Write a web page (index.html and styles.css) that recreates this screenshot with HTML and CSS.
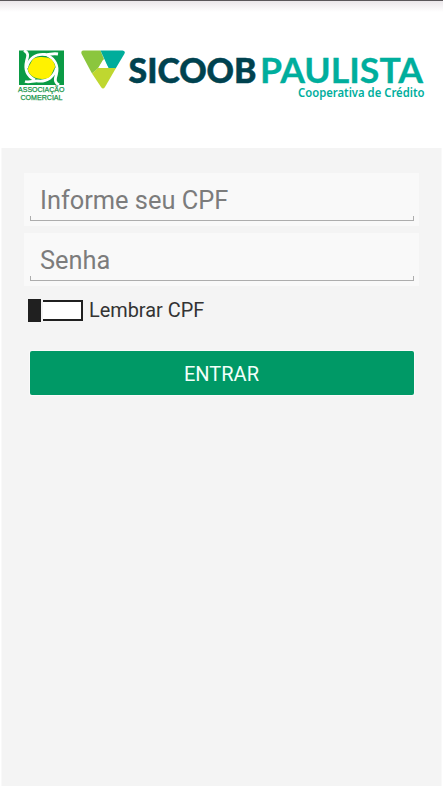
FILE: index.html
```html
<!DOCTYPE html>
<html lang="pt-BR">
<head>
<meta charset="utf-8">
<title>Sicoob Paulista</title>
<link rel="stylesheet" href="styles.css">
</head>
<body>
<header class="header">
  <svg class="assoc" viewBox="0 0 48 58" role="img" aria-label="Associação Comercial">
    <rect x="2" y="1.500" width="45" height="34.500" fill="#0b9b45"/>
    <g fill="none" stroke="#fff" stroke-width="2.800">
      <path d="M7 1.500C12 4 11 7 9.500 12C7.500 20 10 27 18 31"/>
      <path d="M41 5C35 4 33 6 28 5.500C19 4.500 12 9 9.500 19"/>
      <path d="M42 36C37 33 38 30 39.500 25C41.500 17 38 10 30 6"/>
      <path d="M8 32.500C13 34 16 31.500 21 32C30 33 37 28 39.500 19"/>
    </g>
    <path d="M18 9C23 7 31 8 34 10C38 14 39 18 37 20C35 24 34 28 31 29C26 31 19 30 15 27C11 24 10 20 12 17C14 14 15 10 18 9Z" fill="#fff200"/>
    <g class="assoc-name" fill="#159447">
      <text x="1" y="43" textLength="46.500" lengthAdjust="spacingAndGlyphs">ASSOCIAÇÃO</text>
      <text x="3.500" y="51" textLength="42" lengthAdjust="spacingAndGlyphs">COMERCIAL</text>
    </g>
  </svg>
  <svg class="sicoob" viewBox="0 0 346 58" role="img" aria-label="Sicoob Paulista, Cooperativa de Crédito">
    <path d="M2.500 1.500H19.500L23 10L17.500 19L11 24.500L.6 5Q-.5 1.500 2.500 1.500Z" fill="#8bc63e"/>
    <path d="M19.500 1.500H41.500Q45 2 43.300 5L34.800 19.300H27.500Z" fill="#00ad9b"/>
    <path d="M17 19H35L24 38Q22 41 20 38L11 24.500Z" fill="#bfd730"/>
    <path d="M22.300 10.500L27.500 19H17.200Z" fill="#fff"/>
    <g class="brand">
      <text x="47.500" y="34" textLength="128" lengthAdjust="spacingAndGlyphs" fill="#00424f" stroke="#00424f" stroke-width=".5">SICOOB</text>
      <text class="paulista" x="179" y="34" textLength="163" lengthAdjust="spacingAndGlyphs" fill="#00ae9d">PAULISTA</text>
    </g>
    <text class="tagline" x="217" y="48" textLength="126.500" lengthAdjust="spacingAndGlyphs" fill="#00ae9d">Cooperativa de Crédito</text>
  </svg>
</header>
<main class="login">
  <label class="field"><input class="input" type="text" placeholder="Informe seu CPF"><span class="line"></span></label>
  <label class="field"><input class="input" type="password" placeholder="Senha"><span class="line"></span></label>
  <div class="remember">
    <span class="thumb"></span><span class="track"></span>
    <span class="remember-text">Lembrar CPF</span>
  </div>
  <button class="enter" type="button">ENTRAR</button>
</main>
</body>
</html>
```
FILE: styles.css
```css
* { box-sizing: border-box; }
body {
  margin: 0;
  height: 788px;
  overflow: hidden;
  background: #fff;
  font-family: Roboto, sans-serif;
}
.header {
  height: 148px;
  padding: 48px 0 0 17px;
  display: flex;
  border-top: 1px solid #5a575a;
  background: linear-gradient(#ebe7ea, #fff 11px);
}
.assoc { width: 48px; height: 58px; flex: none; overflow: visible; }
.assoc-name { font: 400 7.5px "Liberation Sans", sans-serif; stroke: #159447; stroke-width: .25px; }
.sicoob { width: 346px; height: 58px; margin-left: 16px; flex: none; overflow: visible; }
.brand { font: 900 34.5px Lato, sans-serif; }
.paulista { font-weight: 700; stroke: #00ae9d; stroke-width: .3px; }
.tagline { font: 600 12px "Noto Sans", sans-serif; }
.login {
  height: 638px;
  margin: 0 1px 0 1px;
  padding: 25px 23px 0;
  background: #f4f4f4;
  border-left: 1px solid #f9f9f9;
  border-right: 1px solid #f9f9f9;
}
.field {
  display: flex;
  flex-direction: column;
  width: 395px;
  height: 53px;
  margin: 0 0 7px -1px;
  padding: 0 5px 0 6px;
  background: #f9f9f9;
}
.input {
  width: 100%;
  height: 43px;
  padding: 10px 9px 0 10px;
  border: 0;
  background: none;
  font: 25.400px Roboto, sans-serif;
  color: #7c7c7c;
}
.input::placeholder { color: #7c7c7c; opacity: 1; }
.line {
  height: 5px;
  border: 1px solid #adadad;
  border-top: 0;
}
.remember {
  display: flex;
  align-items: center;
  height: 24px;
  margin: 12px 0 0 3px;
}
.thumb { width: 13px; height: 23px; background: #202020; }
.track {
  width: 40px;
  height: 21px;
  margin-left: 2px;
  border: 2px solid #202020;
  border-left: 0;
  background: #fff;
}
.remember-text { margin: 1px 0 0 6px; font-size: 19.900px; color: #333; white-space: nowrap; }
.enter {
  display: block;
  width: 384px;
  height: 44px;
  margin: 29px 0 0 4.500px;
  padding: 2px 0 0;
  border: 0;
  border-radius: 2px;
  background: #009966;
  box-shadow: 0 0 0 1px #fafafa;
  font: 20px Roboto, sans-serif;
  color: #f2fffa;
}
```
